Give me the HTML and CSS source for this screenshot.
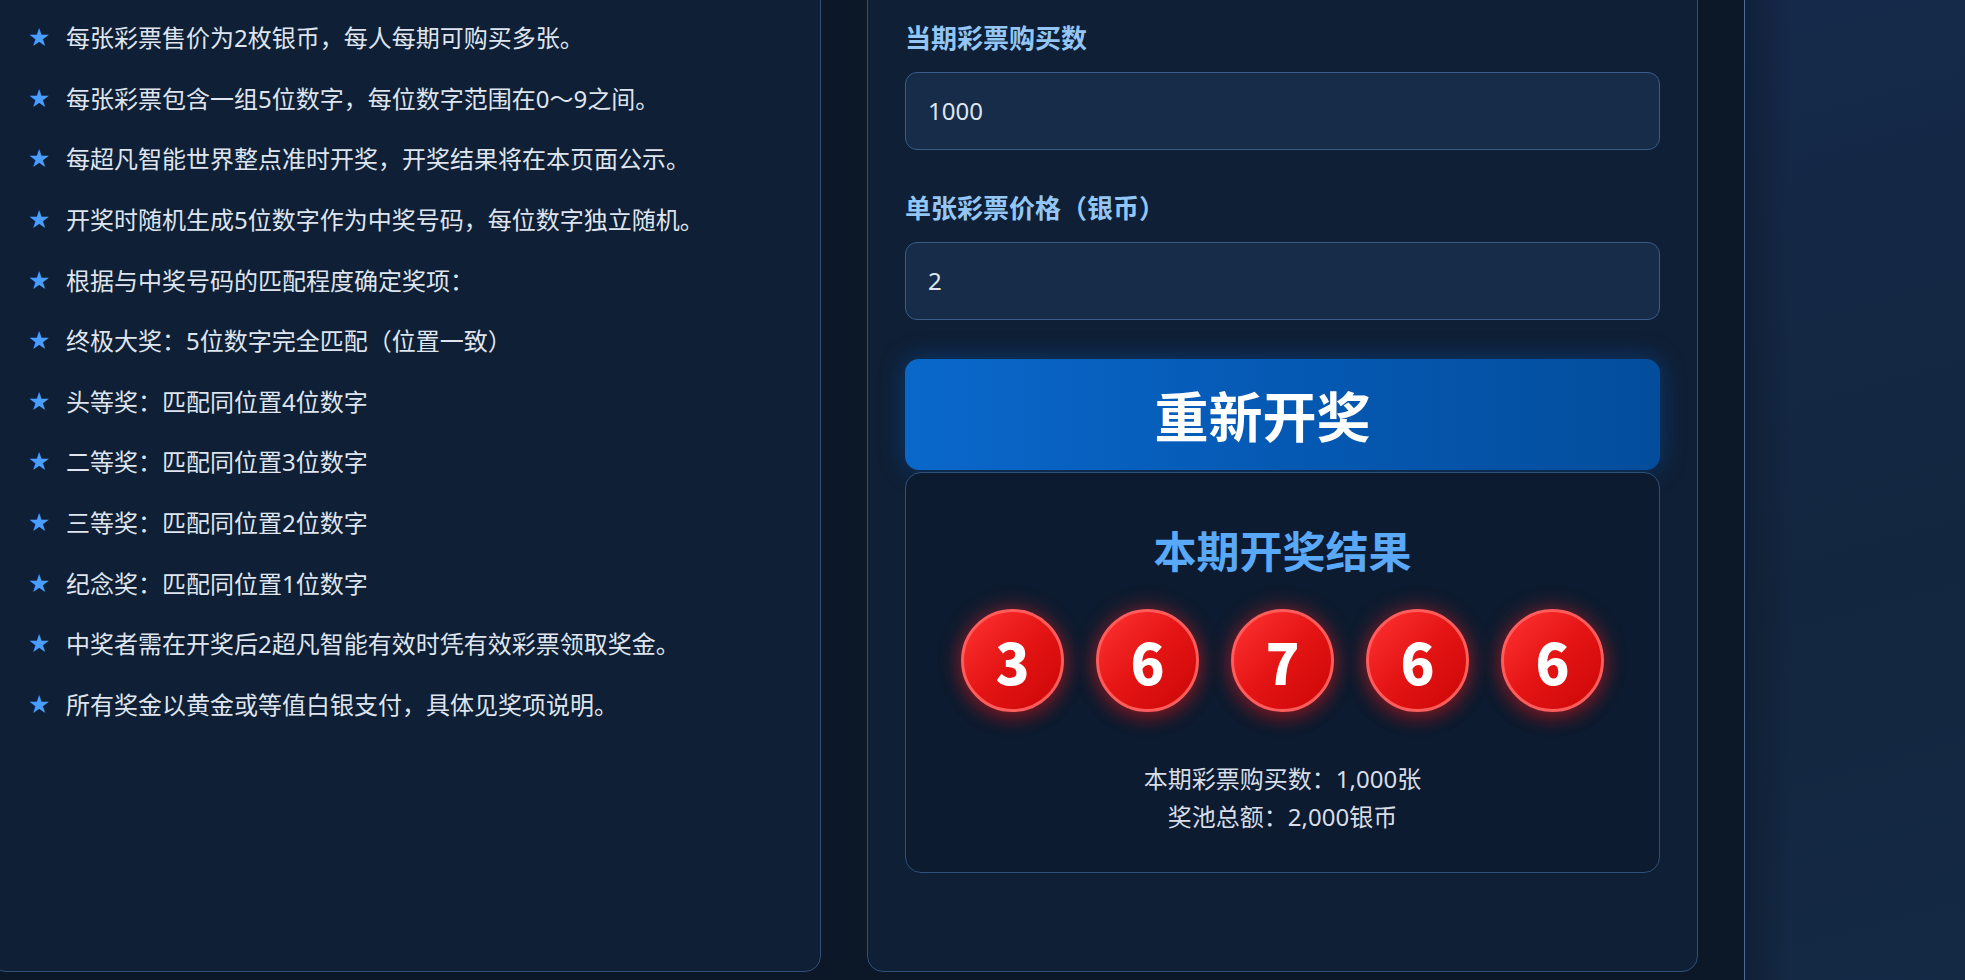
FILE: index.html
```html
<!DOCTYPE html>
<html lang="zh-CN">
<head>
    <meta charset="UTF-8">
    <meta name="viewport" content="width=device-width, initial-scale=1.0">
    <title>超凡彩票</title>
    <link rel="stylesheet" href="styles.css">
</head>
<body>

<div class="board">
    <!-- 规则说明 -->
    <section class="panel rules">
        <ul class="rule-list">
            <li><span class="star">★</span>每张彩票售价为2枚银币，每人每期可购买多张。</li>
            <li><span class="star">★</span>每张彩票包含一组5位数字，每位数字范围在0～9之间。</li>
            <li><span class="star">★</span>每超凡智能世界整点准时开奖，开奖结果将在本页面公示。</li>
            <li><span class="star">★</span>开奖时随机生成5位数字作为中奖号码，每位数字独立随机。</li>
            <li><span class="star">★</span>根据与中奖号码的匹配程度确定奖项：</li>
            <li><span class="star">★</span>终极大奖：5位数字完全匹配（位置一致）</li>
            <li><span class="star">★</span>头等奖：匹配同位置4位数字</li>
            <li><span class="star">★</span>二等奖：匹配同位置3位数字</li>
            <li><span class="star">★</span>三等奖：匹配同位置2位数字</li>
            <li><span class="star">★</span>纪念奖：匹配同位置1位数字</li>
            <li><span class="star">★</span>中奖者需在开奖后2超凡智能有效时凭有效彩票领取奖金。</li>
            <li><span class="star">★</span>所有奖金以黄金或等值白银支付，具体见奖项说明。</li>
        </ul>
    </section>

    <!-- 开奖区 -->
    <section class="panel draw">
        <div class="form-group">
            <label for="ticket-count">当期彩票购买数</label>
            <input type="text" id="ticket-count" value="1000">
        </div>
        <div class="form-group">
            <label for="ticket-price">单张彩票价格（银币）</label>
            <input type="text" id="ticket-price" value="2">
        </div>

        <button class="draw-button">重新开奖</button>

        <div class="result">
            <h2>本期开奖结果</h2>
            <div class="balls">
                <span class="ball">3</span>
                <span class="ball">6</span>
                <span class="ball">7</span>
                <span class="ball">6</span>
                <span class="ball">6</span>
            </div>
            <div class="stats">
                <p>本期彩票购买数：1,000张</p>
                <p>奖池总额：2,000银币</p>
            </div>
        </div>
    </section>

    <!-- 右侧栏 -->
    <aside class="side"></aside>
</div>

</body>
</html>
```

FILE: styles.css
```css
/* 基础 */
html, body {
    margin: 0;
    padding: 0;
    height: 100%;
    overflow: hidden;
    background-color: #0c1828;
    color: #dfe5ee;
    font-family: "Noto Sans", "Noto Sans CJK SC", sans-serif;
}

/* 页面已滚动，面板顶部和左侧在视口外 */
.board {
    display: grid;
    grid-template-columns: 831px 831px 831px;
    gap: 46px;
    margin-top: -19px;
    margin-left: -10px;
}

.panel {
    background-color: #0f1f35;
    border: 1px solid #30507a;
    border-radius: 16px;
}

/* 规则列表 */
.rules {
    padding: 26px 37px;
}

.rule-list {
    list-style: none;
    margin: 0;
    padding: 0;
}

.rule-list li {
    display: flex;
    align-items: center;
    font-size: 24px;
    line-height: 36px;
    padding: 12.3px 0;
}

.star {
    width: 21px;
    margin-right: 17px;
    color: #4a9eff;
    font-family: "DejaVu Sans", sans-serif;
    font-size: 25px;
}

/* 开奖区 */
.draw {
    padding: 37px;
}

.form-group {
    display: flex;
    flex-direction: column;
    margin-bottom: 39.5px;
}

.form-group label {
    font-size: 26px;
    line-height: 39px;
    font-weight: bold;
    color: #93c6f4;
    margin-bottom: 13.5px;
}

.form-group input {
    height: 78px;
    box-sizing: border-box;
    padding: 0 22px;
    background-color: #172c48;
    border: 1px solid #3a5c88;
    border-radius: 12px;
    color: #dfe6f0;
    font-family: inherit;
    font-size: 24px;
    outline: none;
}

.draw-button {
    display: block;
    width: 100%;
    height: 111px;
    margin-top: -0.5px;
    padding: 0 40px 0 0;
    border: none;
    border-radius: 14px;
    background: linear-gradient(90deg, #0a68cb 0%, #0559b3 50%, #034d9c 100%);
    box-shadow: 0 0 26px rgba(0, 110, 230, 0.35);
    color: #ffffff;
    font-family: "Noto Sans CJK SC", sans-serif;
    font-size: 54px;
    font-weight: bold;
    cursor: pointer;
}

.result {
    margin-top: 2px;
    margin-bottom: 61px;
    padding: 44px 36px 36px;
    background-color: #0c1b2f;
    border: 1px solid #2f5078;
    border-radius: 16px;
    text-align: center;
}

.result h2 {
    margin: 0 0 28px;
    font-family: "Noto Sans CJK SC", sans-serif;
    font-size: 43px;
    line-height: 64px;
    color: #5aa8f8;
}

.balls {
    display: flex;
    justify-content: center;
    gap: 32px;
    margin-bottom: 48px;
}

.ball {
    display: flex;
    align-items: center;
    justify-content: center;
    width: 103px;
    height: 103px;
    box-sizing: border-box;
    border: 3px solid #ff5c5c;
    border-radius: 50%;
    background: linear-gradient(135deg, #ff3232 0%, #e41414 50%, #cc0606 100%);
    box-shadow: 0 0 22px rgba(255, 40, 40, 0.45), 0 8px 18px rgba(200, 0, 0, 0.3);
    color: #ffffff;
    font-family: "Noto Sans CJK SC", sans-serif;
    font-size: 56px;
    font-weight: 900;
}

.stats p {
    margin: 0;
    font-size: 24px;
    line-height: 38px;
    color: #d8dee8;
}

/* 右侧栏，底部超出视口 */
.side {
    margin-bottom: -60px;
    border-left: 1px solid #4d6d98;
    background:
        linear-gradient(90deg, rgba(10, 20, 34, 0.4) 0, rgba(10, 20, 34, 0) 45px),
        linear-gradient(165deg, #15294a 0%, #13263f 50%, #152b48 100%);
}
```
